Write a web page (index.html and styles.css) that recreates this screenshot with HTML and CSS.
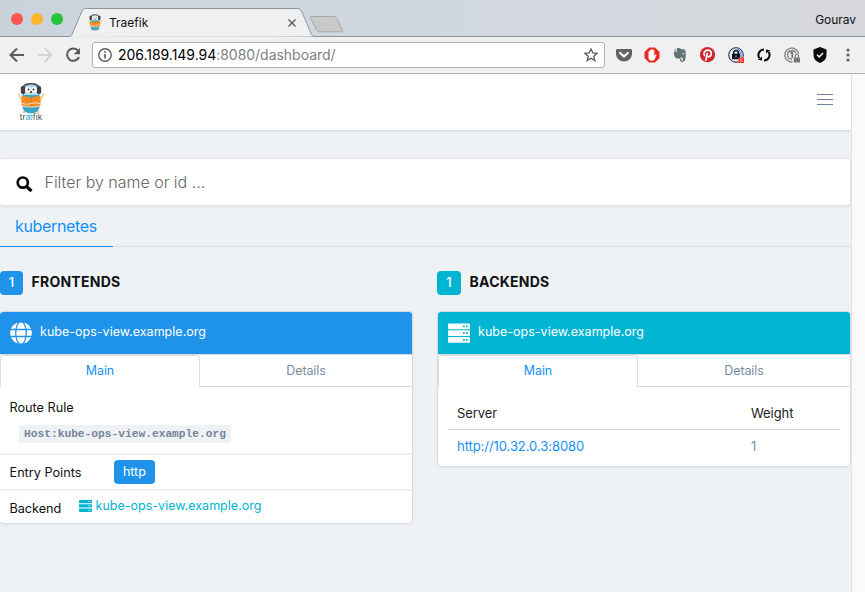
FILE: index.html
```html
<!DOCTYPE html>
<html lang="en">
<head>
<meta charset="utf-8">
<title>Traefik</title>
<link rel="stylesheet" href="styles.css">
</head>
<body>
<svg width="0" height="0" class="defs" aria-hidden="true">
  <symbol id="server" viewBox="0 0 22 20">
    <path fill="currentColor" fill-rule="evenodd" d="M1 .5h20a1 1 0 0 1 1 1v3.700a1 1 0 0 1-1 1H1a1 1 0 0 1-1-1V1.500a1 1 0 0 1 1-1zM15 2.500v1.700h1.800V2.500zm3 0v1.700h1.800V2.500zM1 7.200h20a1 1 0 0 1 1 1v3.700a1 1 0 0 1-1 1H1a1 1 0 0 1-1-1V8.200a1 1 0 0 1 1-1zM15 9.200v1.700h1.800V9.200zm3 0v1.700h1.800V9.200zM1 14h20a1 1 0 0 1 1 1v3.700a1 1 0 0 1-1 1H1a1 1 0 0 1-1-1V15a1 1 0 0 1 1-1zM15 16v1.700h1.800V16zm3 0v1.700h1.800V16z"/>
  </symbol>
  <symbol id="gopher" viewBox="0 0 26 31">
    <path d="M0 10l4 8M26 10l-4 8" stroke="#cfd66a" stroke-width="1.200"/>
    <path d="M7 27l-1.500 3M19 27l1.500 3" stroke="#efc088" stroke-width="2"/>
    <path d="M5 8Q5 1.500 13 1.500T21 8l1 12q0 10.500-9 10.500T4 20z" fill="#35a7c8"/>
    <path d="M6 7Q7 2 13 2t7 5v5H6z" fill="#b9dfea"/>
    <path d="M5 5Q5.500.8 13 .8T21 5" fill="none" stroke="#4a4145" stroke-width="1.500"/>
    <rect x="2.800" y="3" width="4.400" height="8" rx="2" fill="#493b42"/>
    <rect x="18.800" y="3" width="4.400" height="8" rx="2" fill="#493b42"/>
    <circle cx="10" cy="6.800" r="2.900" fill="#fff"/><circle cx="16" cy="6.800" r="2.900" fill="#fff"/>
    <circle cx="10.500" cy="6.500" r=".9" fill="#222"/><circle cx="15.500" cy="6.500" r=".9" fill="#222"/>
    <ellipse cx="13" cy="10" rx="2" ry="1.300" fill="#e8d3a2"/><circle cx="13" cy="9" r="1" fill="#222"/>
    <path d="M3.500 12.500l9.500 2 9.500-2v10L13 24.500l-9.500-2z" fill="#f28b20"/>
    <path d="M13 14.500v8" stroke="#c96d17" stroke-width=".8"/>
    <path d="M4 20.500q5 1.500 9 0t9 0M4 23q9 2 18 0" fill="none" stroke="#f3dcc4" stroke-width="1.200"/>
  </symbol>
</svg>

<header class="browser">
  <div class="tabstrip">
    <svg class="tabshape" width="350" height="37" viewBox="0 0 350 37">
      <path d="M0 37V36.500H69q2 0 3-2L82 11q1-2.500 3.500-2.500H298q2.500 0 3.500 2.500l10 23.500q1 2 3 2H350" fill="#f0f0f0" stroke="#8c96a1"/>
      <path d="M311 16.500h23.500q1.500 0 2 1.200l6 12.300q.7 1.800-1.200 1.800h-22q-2 0-2.800-1.700l-5.800-12q-.7-1.600.3-1.600z" fill="#c9c9c9" stroke="#a4a8ad"/>
    </svg>
    <div class="lights">
      <i class="light red"></i><i class="light amber"></i><i class="light green"></i>
    </div>
    <div class="tab">
      <svg width="14" height="17"><use href="#gopher"/></svg>
      <span class="tab-title">Traefik</span>
      <svg class="close" width="8" height="8" viewBox="0 0 8 8"><path d="M.5.5l7 7M7.500.5l-7 7" stroke="#5a5a5a" stroke-width="1.400"/></svg>
    </div>
    <span class="user">Gourav</span>
  </div>
  <div class="toolbar">
    <div class="nav-icons">
      <svg width="16" height="16" viewBox="0 0 16 16" fill="none" stroke="#5a5a5a" stroke-width="2"><path d="M15 8H2M8 1.500L1.500 8 8 14.500"/></svg>
      <svg width="16" height="16" viewBox="0 0 16 16" fill="none" stroke="#d3d3d3" stroke-width="2"><path d="M1 8h13M8 1.500L14.500 8 8 14.500"/></svg>
      <svg width="16" height="16" viewBox="0 0 16 16"><path d="M13.300 4A6.200 6.200 0 1 0 14 10" fill="none" stroke="#5a5a5a" stroke-width="2"/><path d="M15 1v6.300H8.700z" fill="#5a5a5a"/></svg>
    </div>
    <div class="address">
      <svg width="14" height="14" viewBox="0 0 14 14"><circle cx="7" cy="7" r="6.200" fill="none" stroke="#5a5a5a" stroke-width="1.400"/><path d="M7 6v4.500M7 3.300V5" stroke="#5a5a5a" stroke-width="1.600"/></svg>
      <span class="url"><b>206.189.149.94</b><span class="path">:8080/dashboard/</span></span>
      <svg class="star" width="14" height="14" viewBox="0 0 14 14"><path d="M7 1l1.800 4 4.300.4-3.300 2.900 1 4.300L7 10.300l-3.800 2.300 1-4.300L.9 5.400 5.200 5z" fill="none" stroke="#5a5a5a" stroke-width="1.300"/></svg>
    </div>
    <div class="extensions">
      <svg width="16" height="16" viewBox="0 0 16 16"><path d="M1 2h14q1 0 1 1v4a8 7.500 0 0 1-16 0V3q0-1 1-1z" fill="#646464"/><path d="M4.200 6L8 9.500 11.800 6" fill="none" stroke="#fff" stroke-width="2.200" stroke-linecap="round" stroke-linejoin="round"/></svg>
      <svg width="16" height="16" viewBox="0 0 16 16"><path d="M5 .5h6L15.500 5v6L11 15.500H5L.5 11V5z" fill="#ec2b20"/><path d="M4.500 8V4.700q.7-.8 1.300 0V3.200q.8-.8 1.500 0v-.7q.8-.8 1.500 0V3.200q.8-.8 1.500 0V8.500l1.200-1q1.200-.3.900.6L10.800 12.300Q9.800 13.700 8 13.700q-3.500 0-3.500-3.200z" fill="#fff"/></svg>
      <svg width="16" height="16" viewBox="0 0 16 16"><path d="M5 1q3-.5 4 1l3.500.6q1 .4 1.200 3 .3 5-.6 7.500-.6 1.900-3 1.900-2.200 0-2.300-2 0-1.600 2-1.700v1.200q-.9 0-.8.7.2.600 1.100.500 1-.2.900-1.700-.1-1.700-2-1.800-.5 1.700-2.700 1.500Q2.500 11.500 2 7.500 1.600 5 2.200 4.500H5zM4 1.500v2H2z" fill="#627575"/><circle cx="11.300" cy="6.800" r=".8" fill="#f0f0f0"/></svg>
      <svg width="16" height="16" viewBox="0 0 16 16"><circle cx="7.500" cy="7.700" r="7.600" fill="#cf2631"/><path d="M7.400 6.300L5.800 13.300M4.600 8.600Q3.400 6.800 4.400 5 5.600 3 8.100 3.100q3.200.3 3.200 3Q11.100 9.700 8.600 9.800q-1.200 0-1.700-1" fill="none" stroke="#fff" stroke-width="1.600" stroke-linecap="round"/></svg>
      <svg width="16" height="16" viewBox="0 0 16 16"><circle cx="8" cy="8" r="7.300" fill="#dbe7fb" stroke="#222"/><path d="M9 1.500a6.500 6.500 0 0 1 5.500 6.500v2H9z" fill="#8aaeee"/><path d="M5.800 7V5.500Q5.800 3.500 8 3.500t2.200 2V7" fill="none" stroke="#111" stroke-width="1.400"/><path d="M4 6.800h8v5.400H4z" fill="#111"/><path d="M8 8.500v2" stroke="#77a4ef" stroke-width="1.200"/><path d="M10.500 10.500H16V16h-5.500z" fill="#ff2b20"/><path d="M11.500 11.500l3.500 3.500m0-3.500L11.500 15" stroke="#ffc0b8" stroke-width=".9"/></svg>
      <svg width="16" height="16" viewBox="0 0 16 16"><path d="M8 2.500A5.600 5.600 0 0 0 3.400 11.200M8 13.500A5.600 5.600 0 0 0 12.600 4.800" fill="none" stroke="#111" stroke-width="2.100"/><path d="M1.800 12.800L6 9.400V13.400zM14.200 3.200L10 6.600V2.600z" fill="#111"/></svg>
      <svg width="16" height="16" viewBox="0 0 16 16"><path d="M8.500 15A7 7 0 1 1 14.700 7M8 12.200A4.300 4.300 0 1 1 12 6.500" fill="none" stroke="#858585" stroke-width="1.400"/><path d="M6.300 5.500h2V11" fill="none" stroke="#777" stroke-width="1.800"/><path d="M9.800 10.500H16V15.500H9.800z" fill="#777"/><path d="M11.300 10.500V9q0-1.500 1.600-1.500T14.500 9v1.500" fill="none" stroke="#777" stroke-width="1.200"/></svg>
      <svg width="16" height="16" viewBox="0 0 16 16"><path d="M8 0l6.500 2.500V8q0 5.500-6.500 8Q1.500 13.500 1.500 8V2.500z" fill="#0b0b0b"/><path d="M5 7.800l2.200 2.100L11 5.900" fill="none" stroke="#fff" stroke-width="1.500"/></svg>
      <svg width="16" height="16" viewBox="0 0 16 16" fill="#5f5f5f"><circle cx="8" cy="3" r="1.600"/><circle cx="8" cy="8" r="1.600"/><circle cx="8" cy="13" r="1.600"/></svg>
    </div>
  </div>
</header>

<div class="viewport">
  <div class="page">
    <nav class="navbar">
      <div class="brand">
        <svg width="26" height="31"><use href="#gopher"/></svg>
        <span class="brand-name">tr<em>æ</em>fik</span>
      </div>
      <div class="burger"><i></i><i></i><i></i></div>
    </nav>
    <main>
      <div class="search">
        <svg width="17" height="17" viewBox="0 0 17 17" fill="none" stroke="#0a0a0a"><circle cx="6.800" cy="6.600" r="5.100" stroke-width="2.700"/><path d="M10.500 10.500L15.500 15.200" stroke-width="3.200"/></svg>
        <span class="placeholder">Filter by name or id ...</span>
      </div>
      <div class="providers"><a class="provider">kubernetes</a></div>
      <div class="columns">
        <section class="column frontends">
          <h2><span class="count">1</span><span class="heading">FRONTENDS</span></h2>
          <div class="card">
            <div class="card-head">
              <svg width="22" height="22" viewBox="0 0 22 22"><circle cx="11" cy="11" r="10.800" fill="#fff"/><g fill="none" stroke="#1f93ea" stroke-width="1.300"><ellipse cx="11" cy="11" rx="5.300" ry="11.300"/><path d="M0 7.500h22M0 14.500h22"/></g></svg>
              <span class="name">kube-ops-view.example.org</span>
            </div>
            <div class="tabs"><a class="active">Main</a><a>Details</a></div>
            <div class="row rule"><span class="label">Route Rule</span><code>Host:kube-ops-view.example.org</code></div>
            <div class="row entry"><span class="label">Entry Points</span><span class="tag">http</span></div>
            <div class="row backend"><span class="label">Backend</span><svg width="13" height="12" viewBox="0 0 13 12" fill="#00b5d1"><rect y="0" width="13" height="3.300" rx=".6"/><rect y="4.300" width="13" height="3.300" rx=".6"/><rect y="8.600" width="13" height="3.300" rx=".6"/><path d="M9 1.700h3M9 6h3M9 10.200h3" stroke="#a6e3ec" stroke-width=".8"/></svg><a class="name">kube-ops-view.example.org</a></div>
          </div>
        </section>
        <section class="column backends">
          <h2><span class="count">1</span><span class="heading">BACKENDS</span></h2>
          <div class="card">
            <div class="card-head">
              <svg width="22" height="20"><use href="#server"/></svg>
              <span class="name">kube-ops-view.example.org</span>
            </div>
            <div class="tabs"><a class="active">Main</a><a>Details</a></div>
            <div class="servers">
              <div class="server-row head"><span>Server</span><span>Weight</span></div>
              <div class="server-row"><a>http://10.32.0.3:8080</a><span class="weight">1</span></div>
            </div>
          </div>
        </section>
      </div>
    </main>
  </div>
  <div class="scrollbar"></div>
</div>
</body>
</html>
```
FILE: styles.css
```css
* { box-sizing: border-box; }
body { margin: 0; width: 865px; height: 592px; overflow: hidden; display: flex; flex-direction: column; font-family: Inter, "Liberation Sans", sans-serif; font-size: 13px; line-height: 20px; color: #222; background: #eef2f5; }
svg { display: block; flex: none; }
.defs { position: absolute; }
span, a { white-space: nowrap; }

.browser { flex: none; }
.tabstrip { position: relative; display: flex; align-items: center; height: 37px; background: linear-gradient(90deg, #cad3dc, #d4d9df 70%, #d5d7da); border-bottom: 1px solid #8c96a1; }
.tabshape { position: absolute; left: 0; top: 0; }
.lights { position: relative; display: flex; gap: 8px; margin-left: 11px; padding-top: 1px; }
.light { width: 12px; height: 12px; border-radius: 50%; }
.red { background: #fc5650; }
.amber { background: #fdb52d; }
.green { background: #27c33b; }
.tab { position: relative; display: flex; align-items: center; width: 208px; margin: 9px 0 0 25px; height: 28px; }
.tab-title { margin-left: 7px; font-size: 12px; letter-spacing: 0; color: #111; }
.close { margin-left: auto; }
.user { margin-left: auto; margin-right: 9px; font-size: 12px; letter-spacing: -.05px; color: #111; padding-top: 3px; }
.toolbar { display: flex; align-items: center; height: 37px; background: #f0f0f0; border-bottom: 1px solid #b4b4b4; }
.nav-icons { display: flex; gap: 12px; width: 92px; padding-left: 9px; }
.address { display: flex; align-items: center; width: 513px; height: 26px; padding: 0 6px 0 5px; background: #fff; border: 1px solid #b0b0b0; border-radius: 3px; }
.url { margin-left: 6px; font-size: 14px; letter-spacing: -.03px; color: #111; }
.url b { font-weight: 400; color: #000; }
.path { color: #808080; }
.star { margin-left: auto; }
.extensions { display: flex; gap: 12px; margin-left: 11px; }

.viewport { flex: 1; display: flex; }
.page { width: 851px; }
.scrollbar { width: 14px; background: #fafafa; border-left: 1px solid #e2e2e2; }
.navbar { display: flex; align-items: center; justify-content: space-between; height: 57px; padding: 0 18px 0 18px; background: #fff; border-bottom: 1px solid #d9dee2; box-shadow: 0 1px 3px rgba(0,0,0,.06); }
.brand { display: flex; flex-direction: column; align-items: center; margin-top: 0; }
.brand-name { margin-top: -1px; font-size: 8px; line-height: 8px; color: #444; }
.brand-name em { font-style: normal; color: #35a7c8; }
.burger { display: flex; flex-direction: column; gap: 4px; margin-top: -5px; }
.burger i { width: 16px; height: 1px; background: #71829e; }
.search { display: flex; align-items: center; width: 851px; height: 48px; margin-top: 27px; padding-left: 15px; background: #fff; border: 1px solid #e0e3e6; border-left-color: #fff; border-radius: 4px; box-shadow: 0 1px 3px rgba(0,0,0,.06); }
.placeholder { margin-left: 11.5px; font-size: 16px; font-weight: 300; letter-spacing: -.02px; color: #666; }
.search svg { margin-top: 4px; }
.providers { display: flex; height: 41px; border-bottom: 1px solid #d8dde1; }
.provider { width: 113px; height: 41px; padding-left: 15px; font-size: 16px; line-height: 40px; font-weight: 400; letter-spacing: -.35px; color: #148ff7; border-bottom: 1px solid #148ff7; }
.columns { display: flex; gap: 24px; margin-top: 24px; align-items: flex-start; }
.column { width: 413px; }
.backends { width: 414px; }
h2 { display: flex; margin: 0; height: 24px; font-size: 14px; line-height: 22px; font-weight: 700; color: #111; }
.count { width: 24px; height: 24px; border-radius: 4px; font-size: 13px; line-height: 23px; font-weight: 500; text-align: center; color: #fff; background: #1f93ea; }
.frontends .count { width: 23px; }
.backends .count, .backends .card-head { background: #00b5d1; }
.heading { margin-left: 8.5px; letter-spacing: .25px; }
.card { margin-top: 16px; border: 1px solid #d9dde1; border-radius: 4px; background: #fff; box-shadow: 0 1px 3px rgba(0,0,0,.06); overflow: hidden; }
.frontends .card { border-left: 0; }
.card-head { display: flex; align-items: center; height: 42px; padding-left: 10px; color: #fff; background: #1f93ea; }
.card-head .name { margin: -2px 0 0 8px; }
.name { font-size: 12.5px; letter-spacing: .02px; }
.tabs { display: flex; height: 33px; border-top: 1px solid #d9dde1; color: #7a8ba3; font-size: 12.5px; letter-spacing: -.1px; }
.tabs a { flex: 1; text-align: center; line-height: 31px; border-bottom: 1px solid #d9dde1; }
.tabs .active { flex: none; width: 200px; line-height: 30px; color: #148ff7; border: 1px solid #d9dde1; border-bottom: 0; border-radius: 4px 4px 0 0; }
.row { display: flex; padding-left: 9.5px; }
.label { color: #111; font-size: 12.700px; }
.rule { flex-direction: column; height: 68px; padding-top: 11px; border-bottom: 2px solid #eef2f5; align-items: flex-start; }
code { margin: 7px 0 0 9.5px; padding: 0 5px; height: 18px; line-height: 18px; font-family: "Liberation Mono", monospace; font-size: 11.220px; font-weight: 700; color: #75829a; background: #eef2f5; }
.entry { height: 36px; border-bottom: 2px solid #eef2f5; align-items: center; }
.entry .label { padding-top: 2px; }
.tag { width: 41px; height: 24px; margin-left: 32.500px; margin-top: -1px; border-radius: 4px; font-size: 12.5px; line-height: 23px; text-align: center; color: #fff; background: #1f93ea; }
.backend { height: 32px; }
.backend .label { width: 51.5px; padding-top: 8px; letter-spacing: -.05px; }
.backend svg { margin: 9px 0 0 18px; color: #00b5d1; }
.backend .name { margin-left: 3.5px; padding-top: 5px; color: #00b5d1; }
.servers { margin: 11px 10px 0; height: 68px; }
.server-row { display: flex; padding-left: 9px; height: 32px; line-height: 32px; color: #7a8ba3; letter-spacing: -.06px; }
.server-row > :first-child { width: 294px; }
.server-row a { color: #148ff7; }
.head { color: #222; line-height: 31px; border-bottom: 1px solid #d5d9dc; }
```
